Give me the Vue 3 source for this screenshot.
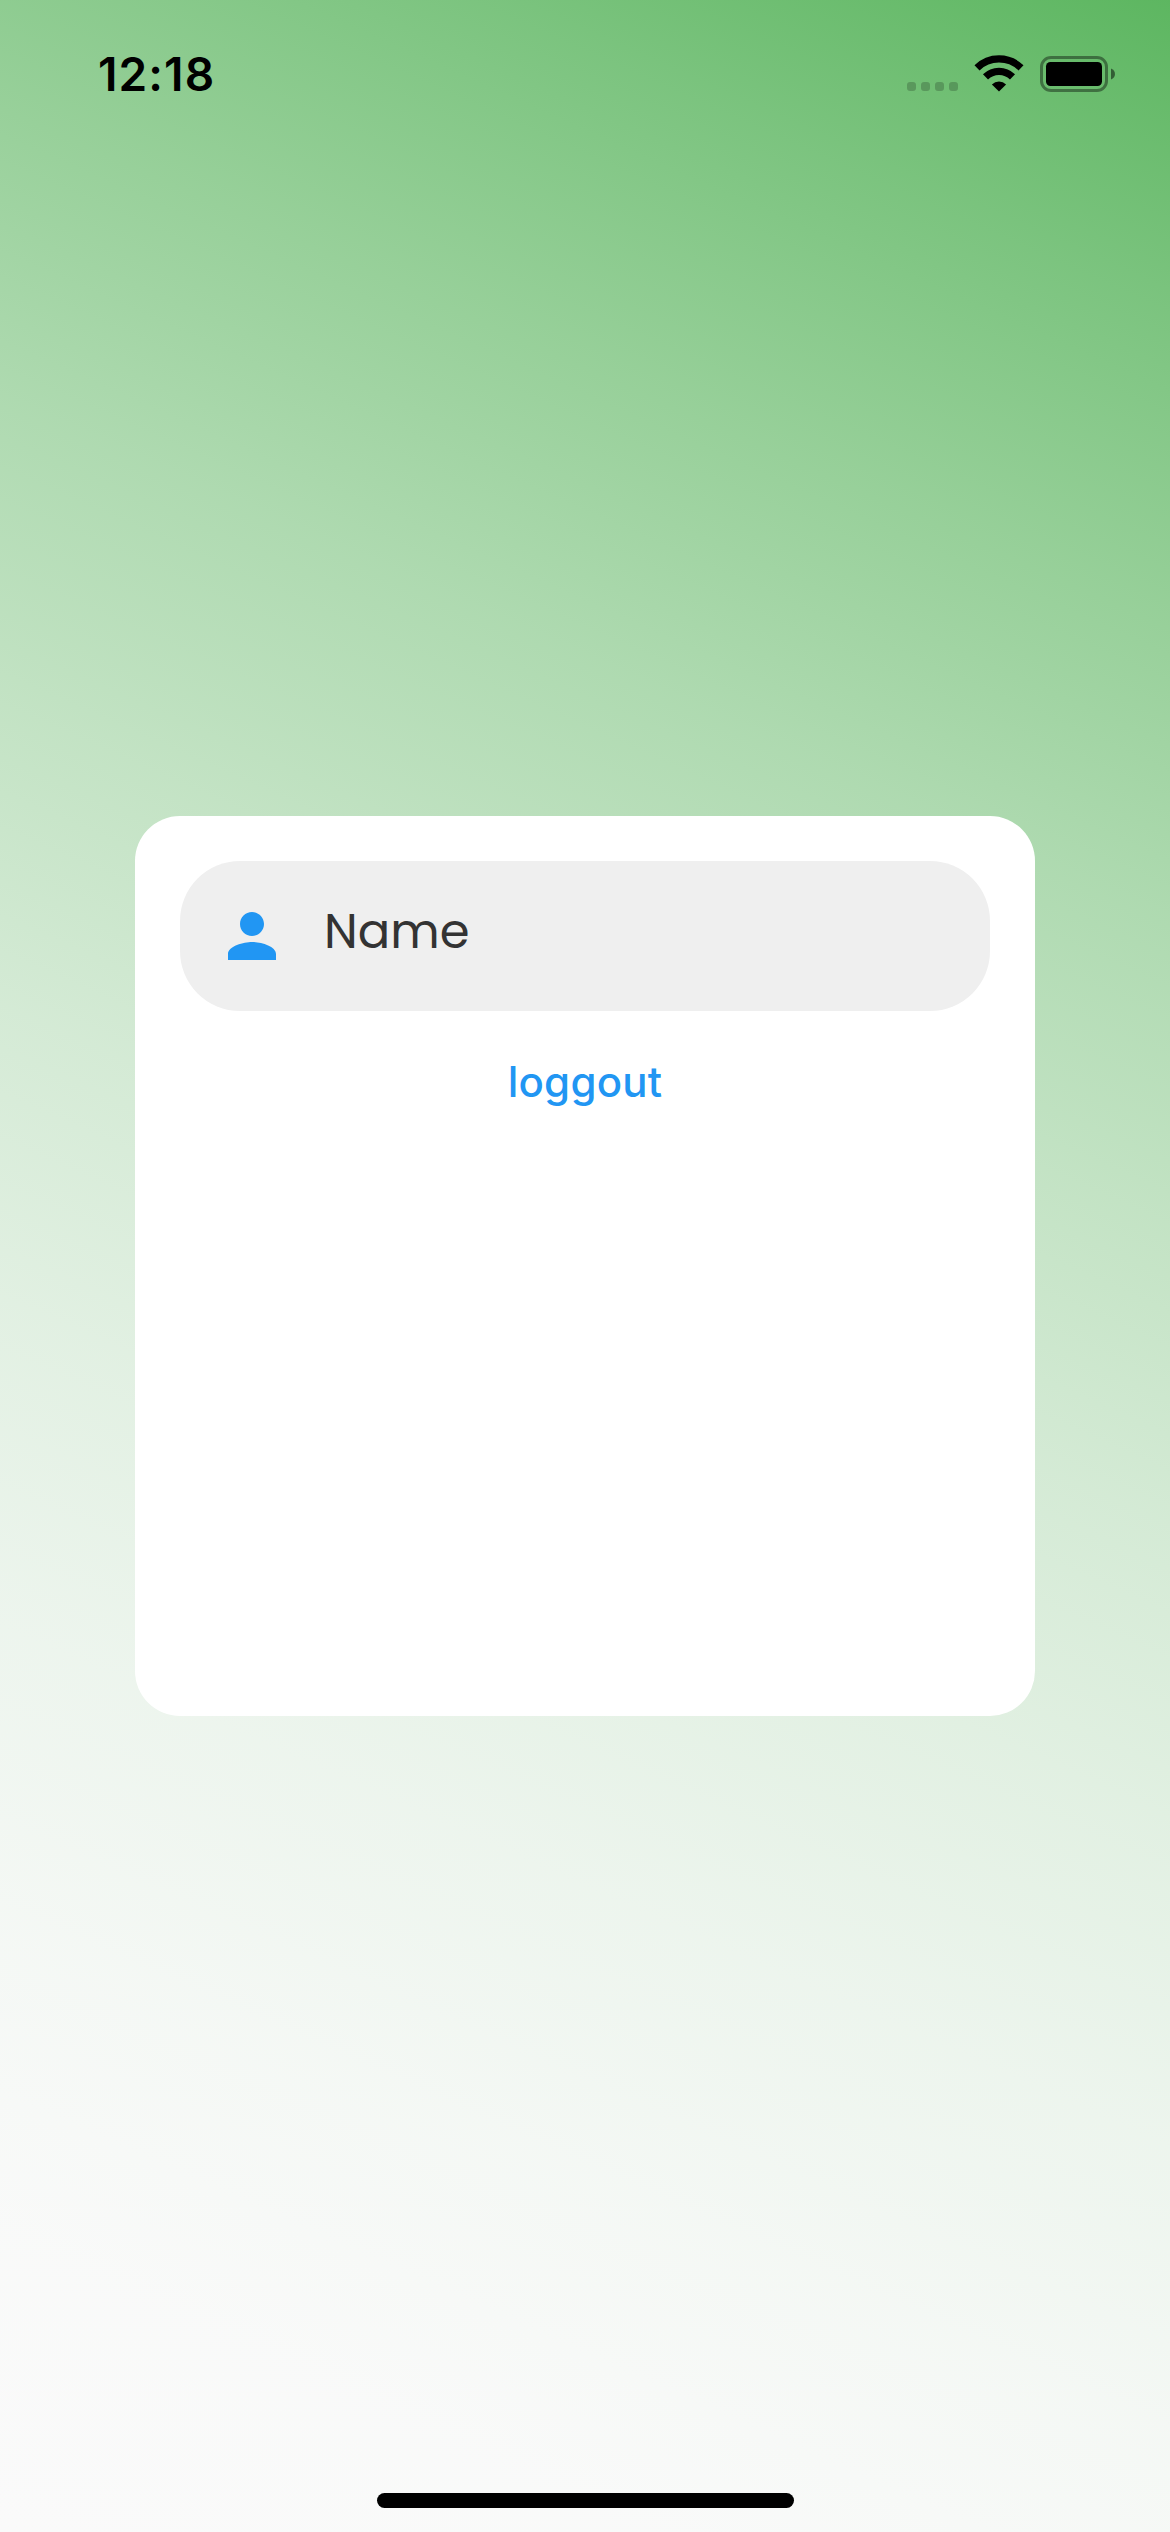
<script setup>
const dots = [0, 1, 2, 3]
</script>

<template>
  <main class="screen">
    <header class="status">
      <span class="time">12:18</span>
      <div class="indicators">
        <div class="cell"><i v-for="d in dots" :key="d"></i></div>
        <svg class="wifi" width="50" height="38" viewBox="0 0 50 38">
          <g fill="none" stroke="#000" stroke-width="7.2">
            <path d="M3 12.900 A31.500 31.500 0 0 1 47 12.900" />
            <path d="M11.500 21.900 A19.200 19.200 0 0 1 38.500 21.900" />
          </g>
          <path d="M25 36.500 L17.900 29.400 A10.400 10.400 0 0 1 32.100 29.400 Z" />
        </svg>
        <svg width="76" height="38" viewBox="0 0 76 38">
          <rect x="1.500" y="2.500" width="65" height="33" rx="9.500" fill="none" stroke="#000" stroke-opacity=".4" stroke-width="3" />
          <rect x="6" y="7" width="56" height="24" rx="4.500" />
          <path d="M71 13.500 C76.300 15.500 76.300 22.500 71 24.500 Z" fill-opacity=".5" />
        </svg>
      </div>
    </header>

    <section class="card">
      <label class="field">
        <svg width="72" height="72" viewBox="0 0 24 24" fill="#2196f3">
          <path d="M12 12c2.210 0 4-1.790 4-4s-1.790-4-4-4-4 1.790-4 4 1.790 4 4 4zm0 2c-2.670 0-8 1.340-8 4v2h16v-2c0-2.660-5.330-4-8-4z" />
        </svg>
        <span class="name">Name</span>
      </label>
      <button class="logout" type="button">loggout</button>
    </section>

    <div class="home"></div>
  </main>
</template>

<style>
body { margin: 0; }
</style>

<style scoped>
.screen {
  box-sizing: border-box;
  width: 1170px;
  height: 2532px;
  display: flex;
  flex-direction: column;
  align-items: center;
  overflow: hidden;
  background:
    linear-gradient(
      204deg,
      rgba(76, 175, 80, .9) 0%,
      rgba(94, 183, 98, .81) 10%,
      rgba(112, 191, 115, .72) 20%,
      rgba(130, 199, 133, .63) 30%,
      rgba(148, 207, 150, .54) 40%,
      rgba(166, 215, 168, .45) 50%,
      rgba(183, 223, 185, .36) 60%,
      rgba(201, 231, 203, .27) 70%,
      rgba(219, 239, 220, .18) 80%,
      rgba(237, 247, 238, .09) 90%,
      rgba(255, 255, 255, 0) 100%
    ),
    #fafafa;
  font-family: Inter, sans-serif;
}
.status {
  box-sizing: border-box;
  width: 100%;
  height: 141px;
  flex: none;
  padding: 51px 54px 0 98px;
  display: flex;
  justify-content: space-between;
  align-items: flex-start;
}
.time {
  font-size: 46px;
  line-height: 46px;
  font-weight: 600;
  letter-spacing: 1.100px;
  color: #000;
}
.indicators { display: flex; align-items: flex-start; padding-top: 4px; }
.cell { display: flex; gap: 5px; padding-top: 27px; margin-right: 16px; }
.cell i { width: 9px; height: 9px; border-radius: 3px; background: rgba(0, 0, 0, .2); }
.wifi { margin-right: 16px; }
.card {
  box-sizing: border-box;
  width: 900px;
  height: 900px;
  flex: none;
  margin-top: 675px;
  padding: 45px;
  border-radius: 45px;
  background: #fff;
  display: flex;
  flex-direction: column;
  align-items: center;
}
.field {
  box-sizing: border-box;
  width: 810px;
  height: 150px;
  border-radius: 60px;
  padding-left: 36px;
  background: #efefef;
  display: flex;
  align-items: center;
}
.name {
  margin: -8px 0 0 36px;
  font-family: Poppins, Inter, sans-serif;
  font-size: 48px;
  line-height: 60px;
  color: #333;
}
.logout {
  margin-top: 44px;
  padding: 0;
  border: 0;
  background: none;
  font: 500 42px/54px Inter, sans-serif;
  letter-spacing: .250px;
  color: #2196f3;
}
.home {
  width: 417px;
  height: 15px;
  margin-top: auto;
  margin-bottom: 24px;
  margin-left: 1px;
  border-radius: 8px;
  background: #000;
}
</style>
